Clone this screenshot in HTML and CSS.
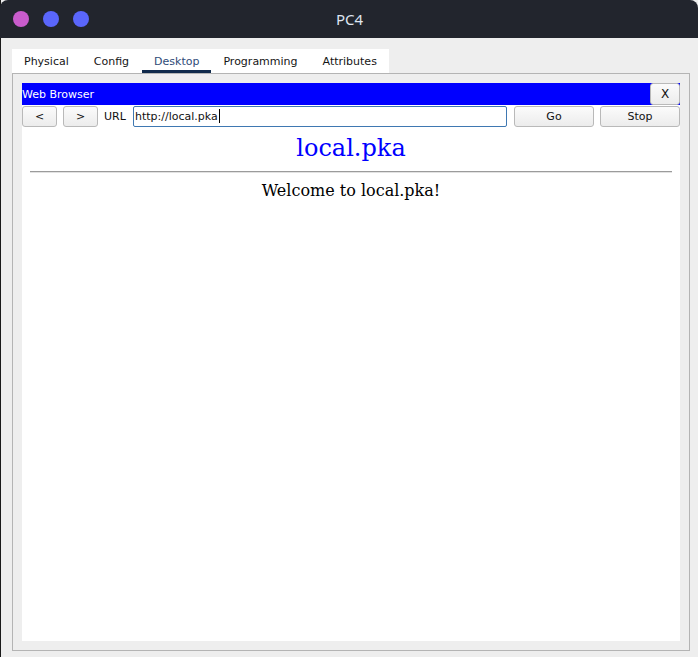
FILE: index.html
```html
<!DOCTYPE html>
<html>
<head>
<meta charset="utf-8">
<title>PC4</title>
<link rel="stylesheet" href="styles.css">
</head>
<body>
<div class="window">
  <div class="titlebar">
    <div class="lights">
      <span class="light light-magenta"></span>
      <span class="light light-blue"></span>
      <span class="light light-blue"></span>
    </div>
    <div class="title">PC4</div>
    <div class="spacer"></div>
  </div>
  <div class="body">
    <div class="tabs">
      <div class="tab">Physical</div>
      <div class="tab">Config</div>
      <div class="tab active">Desktop</div>
      <div class="tab">Programming</div>
      <div class="tab">Attributes</div>
    </div>
    <div class="panel">
      <div class="browser">
        <div class="bw-title">
          <span class="bw-name">Web Browser</span>
          <button class="btn btn-close">X</button>
        </div>
        <div class="toolbar">
          <button class="btn btn-nav">&lt;</button>
          <button class="btn btn-nav">&gt;</button>
          <span class="url-label">URL</span>
          <div class="urlbox"><span>http://local.pka</span><span class="caret"></span></div>
          <button class="btn btn-wide">Go</button>
          <button class="btn btn-wide">Stop</button>
        </div>
        <div class="page">
          <h1 class="page-title">local.pka</h1>
          <div class="rule"></div>
          <p class="welcome">Welcome to local.pka!</p>
        </div>
      </div>
    </div>
  </div>
</div>
</body>
</html>
```
FILE: styles.css
```css
html, body {
  margin: 0;
  padding: 0;
  height: 100%;
  background: #eeeeee;
}
.window {
  width: 698px;
  height: 657px;
  box-sizing: border-box;
  border-left: 1px solid #1a1a1a;
  display: flex;
  flex-direction: column;
  font-family: "DejaVu Sans", sans-serif;
  font-size: 11px;
  color: #111;
}
.titlebar {
  height: 38px;
  flex: none;
  background: #22252d;
  border-radius: 8px 8px 0 0;
  display: grid;
  grid-template-columns: 1fr auto 1fr;
  align-items: center;
  margin-left: -1px;
}
.lights {
  display: flex;
  gap: 14px;
  padding-left: 13px;
  margin-top: -1px;
}
.light {
  width: 16px;
  height: 16px;
  border-radius: 50%;
  display: block;
}
.light-magenta { background: #c95ccc; }
.light-blue { background: #5a66fb; }
.title {
  font-family: "Noto Sans", sans-serif;
  font-size: 15px;
  color: #dfe6f1;
  padding-left: 1px;
  margin-top: -1px;
}
.body {
  flex: 1;
  display: flex;
  flex-direction: column;
  padding: 11px 8px 6px 11px;
}
.tabs {
  display: flex;
  align-self: flex-start;
  background: #ffffff;
  height: 24px;
  width: 377px;
  box-sizing: border-box;
}
.tab {
  padding: 1px 12px 0;
  line-height: 23px;
  height: 24px;
  box-sizing: border-box;
  color: #151515;
  margin-right: 1px;
}
.tab.active {
  color: #2f4b78;
  border-bottom: 3px solid #102a4c;
  margin-right: 0;
}
.panel {
  flex: 1;
  border: 1px solid #b4b4b4;
  padding: 9px;
  display: flex;
}
.browser {
  flex: 1;
  background: #ffffff;
  display: flex;
  flex-direction: column;
}
.bw-title {
  height: 22px;
  background: #0000ff;
  display: flex;
  align-items: center;
  justify-content: space-between;
  color: #ffffff;
}
.bw-name {
  padding-top: 1px;
}
.btn {
  font-family: "DejaVu Sans", sans-serif;
  font-size: 11px;
  color: #111;
  background: linear-gradient(#fbfbfb, #ececec);
  border: 1px solid #b9b9b9;
  border-radius: 3px;
  height: 21px;
  padding: 0;
  margin: 0;
}
.btn-close {
  width: 30px;
  height: 22px;
  font-size: 12px;
}
.toolbar {
  display: flex;
  align-items: center;
  height: 22px;
  box-sizing: border-box;
}
.btn-nav {
  width: 35px;
  margin-right: 6px;
}
.url-label {
  margin-right: 7px;
  width: 22px;
}
.urlbox {
  flex: 1;
  height: 21px;
  box-sizing: border-box;
  border: 1px solid #3f78b2;
  border-radius: 2px;
  display: flex;
  align-items: center;
  padding-left: 1px;
  margin-right: 7px;
}
.caret {
  display: inline-block;
  width: 1px;
  height: 14px;
  background: #000;
  margin-left: 1px;
}
.btn-wide {
  width: 80px;
}
.btn-wide + .btn-wide {
  margin-left: 6px;
}
.page {
  flex: 1;
  padding: 0 8px;
  font-family: "DejaVu Serif", serif;
  text-align: center;
}
.page-title {
  margin: 7px 0 0;
  font-size: 24px;
  font-weight: normal;
  line-height: 28px;
  color: #0000ff;
}
.rule {
  margin-top: 9px;
  height: 1px;
  background: #9b9b9b;
  border-bottom: 1px solid #e2e2e2;
}
.welcome {
  margin: 8px 0 0;
  font-size: 16px;
  line-height: 20px;
  color: #000;
}
```
